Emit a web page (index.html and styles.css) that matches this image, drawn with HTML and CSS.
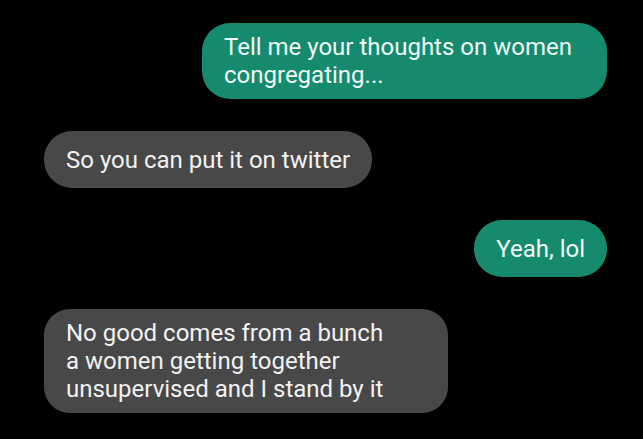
FILE: index.html
```html
<!DOCTYPE html>
<html lang="en">
<head>
  <meta charset="UTF-8">
  <meta name="viewport" content="width=device-width, initial-scale=1.0">
  <title>Chat</title>
  <link rel="stylesheet" href="styles.css">
</head>
<body>

  <div class="chat">
    <div class="bubble sent wide-1">Tell me your thoughts on women<br>congregating...</div>
    <div class="bubble received">So you can put it on twitter</div>
    <div class="bubble sent">Yeah, lol</div>
    <div class="bubble received wide-2">No good comes from a bunch<br>a women getting together<br>unsupervised and I stand by it</div>
  </div>

</body>
</html>
```

FILE: styles.css
```css
/* General */
body {
  margin: 0;
  padding: 0;
  background: #000;
  font-family: Roboto, 'Noto Sans', sans-serif;
  overflow: hidden;
}

/* Conversation column */
.chat {
  display: flex;
  flex-direction: column;
  gap: 32px;
  padding: 23px 36px 0 44px;
}

/* Bubbles */
.bubble {
  box-sizing: border-box;
  min-height: 57px;
  padding: 10px 22px;
  border-radius: 28px;
  font-size: 24px;
  line-height: 28px;
  display: flex;
  align-items: center;
}

.sent {
  align-self: flex-end;
  background: #168a6e;
  color: #eef8f4;
}

.received {
  align-self: flex-start;
  background: #484848;
  color: #f2f2f2;
}

.wide-1 {
  width: 405px;
}

.wide-2 {
  width: 404px;
  border-radius: 26px;
}
```
